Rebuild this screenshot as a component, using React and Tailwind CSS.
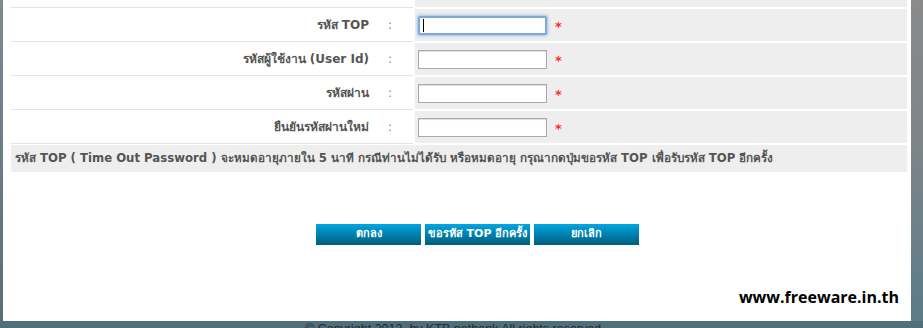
import React from "react";

const font = { fontFamily: '"DejaVu Sans", Tahoma, "Noto Sans", sans-serif' };

function Row({ label, focused }) {
  return (
    <div className="flex h-[34px]">
      <div className="flex w-[402px] h-[33px] border-b border-[#e4e4e4] bg-white">
        <div className="w-[366px] pr-[8px] text-right text-[12px] font-bold text-[#555] leading-[32px]">{label}</div>
        <div className="w-[36px] pl-[11px] text-[12px] text-[#888] leading-[32px]">:</div>
      </div>
      <div className="w-[2px]" />
      <div className="flex-1 h-[32px] bg-[#eeeeee] flex items-center pl-[3px]">
        {focused ? (
          <div className="w-[129px] h-[19px] bg-white border-2 border-[#7fa9dc] rounded-[2px] shadow-[0_0_3px_1px_#9cc0ec] flex items-center pl-[3px]">
            <div className="w-[1px] h-[13px] bg-black" />
          </div>
        ) : (
          <div className="w-[129px] h-[19px] bg-white border border-[#a9a9a9] shadow-[inset_0_1px_1px_#ddd]" />
        )}
        <span className="ml-[8px] text-[13px] font-bold text-[#ff2a2a] leading-none mt-[2px]">*</span>
      </div>
    </div>
  );
}

function Btn({ children }) {
  return (
    <div className="h-[21px] w-[105px] flex items-center justify-center bg-gradient-to-b from-[#00a6e2] to-[#005d7d] text-white text-[11px] font-bold whitespace-nowrap overflow-hidden">
      {children}
    </div>
  );
}

export default function App() {
  return (
    <div className="w-[923px] h-[328px] overflow-hidden flex flex-col bg-[#4f6f7c]" style={font}>
      <div className="flex h-[321px] shrink-0">
        <div className="w-[3px] bg-gradient-to-b from-[#7f8a90] to-[#566f7a]" />
        <div className="w-[908px] bg-white flex flex-col">
          <div className="pl-[8px] pr-[4px] flex flex-col">
            <div className="flex h-[9px]">
              <div className="w-[402px] h-[8px] border-b border-[#e4e4e4] bg-white" />
              <div className="w-[2px]" />
              <div className="flex-1 h-[7px] bg-[#eeeeee]" />
            </div>
            <Row label="รหัส TOP" focused />
            <Row label="รหัสผู้ใช้งาน (User Id)" />
            <Row label="รหัสผ่าน" />
            <Row label="ยืนยันรหัสผ่านใหม่" />
            <div className="h-[27px] bg-[#eeeeee] pl-[4px] text-[11.7px] font-bold text-[#555] leading-[27px] whitespace-nowrap">
              รหัส TOP ( Time Out Password ) จะหมดอายุภายใน 5 นาที กรณีท่านไม่ได้รับ หรือหมดอายุ กรุณากดปุ่มขอรหัส TOP เพื่อรับรหัส TOP อีกครั้ง
            </div>
          </div>
          <div className="mt-[52px] flex gap-[4px] pl-[313px]">
            <Btn>ตกลง</Btn>
            <Btn>ขอรหัส TOP อีกครั้ง</Btn>
            <Btn>ยกเลิก</Btn>
          </div>
          <div className="mt-[42px] flex justify-end pr-[12px]">
            <span className="text-[16px] font-bold text-black leading-[20px]" style={{ fontFamily: '"Open Sans", "Liberation Sans", sans-serif' }}>www.freeware.in.th</span>
          </div>
        </div>
        <div className="flex-1 bg-gradient-to-b from-[#8a8a8a] via-[#7b8489] to-[#5a7b88]" />
      </div>
      <div className="pl-[305px] pt-[1px] text-[12.5px] text-[#1d2b30] leading-[14px] whitespace-nowrap" style={{ fontFamily: '"Liberation Sans", sans-serif' }}>
        © Copyright 2012&nbsp;&nbsp;by KTB nethank All rights reserved
      </div>
    </div>
  );
}
